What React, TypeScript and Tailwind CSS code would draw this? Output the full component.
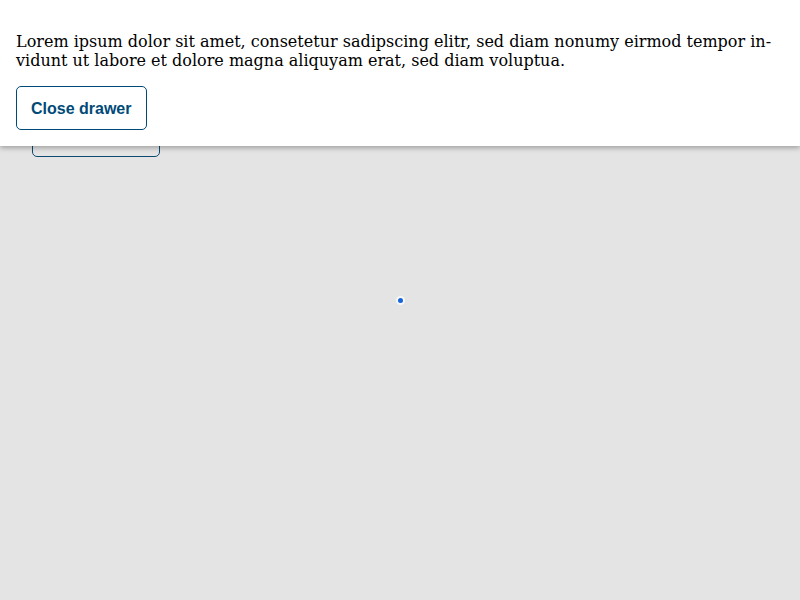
export default function App() {
  return (
    <div className="relative min-h-screen w-full bg-[#e4e4e4] font-['DejaVu_Serif',serif]">
      {/* page content behind the drawer */}
      <div className="px-8 pt-[112px]">
        <button className="h-[45px] w-[128px] rounded-[5px] border border-[#0b4a72] font-['Liberation_Sans',sans-serif] text-base font-bold text-[#0b4a72]">
          Open drawer
        </button>
      </div>

      {/* loading dot */}
      <div className="absolute left-[398px] top-[298px] h-[5px] w-[5px] rounded-full bg-[#1565d8] ring-2 ring-white/70" />

      {/* drawer */}
      <div className="absolute inset-x-0 top-0 bg-white px-4 py-4 shadow-[0_2px_5px_rgba(0,0,0,0.3)]">
        <p className="my-4 text-base leading-[19px] text-black">
          Lorem ipsum dolor sit amet, consetetur sadipscing elitr, sed diam nonumy eirmod tempor in{"\u00AD"}vidunt ut labore et dolore magna aliquyam erat, sed diam voluptua.
        </p>
        <button className="flex h-[44px] items-center rounded-[5px] border border-[#004a78] pb-[1px] pl-[14px] pr-[15px] pt-[2px] font-['Liberation_Sans',sans-serif] text-base font-bold text-[#004a78]">
          Close drawer
        </button>
      </div>
    </div>
  );
}
